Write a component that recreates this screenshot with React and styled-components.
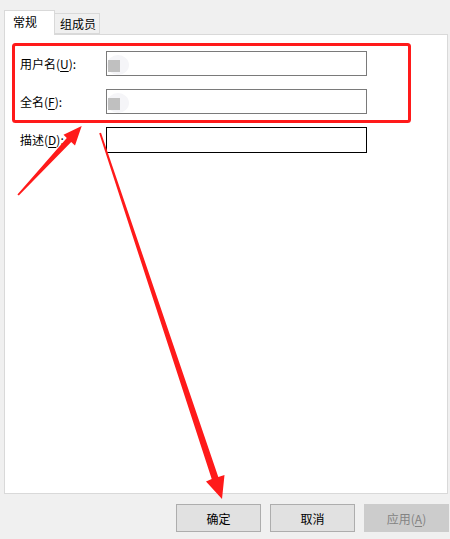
import React from "react";
import styled, { createGlobalStyle } from "styled-components";

const Global = createGlobalStyle`
  html, body { margin: 0; padding: 0; background: #f0f0f0; }
  body { font-family: "Noto Sans CJK SC", "Noto Sans", sans-serif; font-size: 12px; color: #000; }
`;

const Window = styled.div`
  position: relative;
  width: 450px;
  height: 539px;
  box-sizing: border-box;
  padding: 10px 1px 0 4px;
  display: flex;
  flex-direction: column;
`;

const TabRow = styled.div`
  display: flex;
  align-items: flex-end;
  height: 24px;
  position: relative;
  z-index: 1;
`;

const Tab = styled.div`
  box-sizing: border-box;
  height: ${(p) => (p.$active ? "25px" : "21px")};
  margin-bottom: ${(p) => (p.$active ? "-1px" : "0")};
  padding: ${(p) => (p.$active ? "0 0 2px 8px" : "0 0 0 5px")};
  width: ${(p) => (p.$active ? "51px" : "45px")};
  background: ${(p) => (p.$active ? "#fff" : "#f0f0f0")};
  border: 1px solid #d9d9d9;
  border-bottom: ${(p) => (p.$active ? "none" : "1px solid #d9d9d9")};
  border-left: ${(p) => (p.$active ? "1px solid #d9d9d9" : "none")};
  display: flex;
  align-items: center;
  font-size: 12px;
  line-height: 1;
`;

const Panel = styled.div`
  width: 444px;
  height: 460px;
  box-sizing: border-box;
  background: #fff;
  border: 1px solid #d9d9d9;
  padding: 16px 0 0 15px;
`;

const Form = styled.div`
  display: grid;
  grid-template-columns: 86px 261px;
  row-gap: 13px;
`;

const Label = styled.div`
  display: flex;
  align-items: center;
  height: 25px;
  font-size: 12px;
  u { text-decoration: underline; text-underline-offset: 2px; }
`;

const Input = styled.div`
  position: relative;
  box-sizing: border-box;
  height: ${(p) => (p.$tall ? "26px" : "25px")};
  border: 1px solid ${(p) => (p.$focus ? "#000" : "#7a7a7a")};
  background: #fff;
`;

const Blur = styled.span`
  position: absolute;
  left: 0px;
  top: 3px;
  width: 22px;
  height: 20px;
  border-radius: 50%;
  background: #f5f5f8;
`;

const Mask = styled.span`
  position: absolute;
  left: 1px;
  top: 8px;
  width: 12px;
  height: 12px;
  background: #c0c0c0;
`;

const ButtonRow = styled.div`
  display: flex;
  justify-content: flex-end;
  gap: 9px;
  margin-top: 10px;
`;

const Button = styled.div`
  box-sizing: border-box;
  width: 85px;
  height: 28px;
  display: flex;
  align-items: center;
  justify-content: center;
  background: ${(p) => (p.$disabled ? "#cccccc" : "#e1e1e1")};
  border: 1px solid ${(p) => (p.$disabled ? "#cccccc" : "#adadad")};
  color: ${(p) => (p.$disabled ? "#838383" : "#000")};
  font-size: 12px;
  u { text-decoration: underline; text-underline-offset: 2px; }
`;

const Overlay = styled.svg`
  position: absolute;
  left: 0;
  top: 0;
  pointer-events: none;
`;

const fields = [
  { label: "用户名", key: "U", mask: true },
  { label: "全名", key: "F", mask: true },
  { label: "描述", key: "D", focus: true, tall: true },
];

export default function App() {
  return (
    <>
      <Global />
      <Window>
        <TabRow>
          <Tab $active>常规</Tab>
          <Tab>组成员</Tab>
        </TabRow>
        <Panel>
          <Form>
            {fields.map((f) => (
              <React.Fragment key={f.key}>
                <Label>
                  {f.label}(<u>{f.key}</u>):
                </Label>
                <Input $focus={f.focus} $tall={f.tall}>
                  {f.mask && (
                    <>
                      <Blur />
                      <Mask />
                    </>
                  )}
                </Input>
              </React.Fragment>
            ))}
          </Form>
        </Panel>
        <ButtonRow>
          <Button>确定</Button>
          <Button>取消</Button>
          <Button $disabled>
            应用(<u>A</u>)
          </Button>
        </ButtonRow>
        <Overlay width="450" height="539" viewBox="0 0 450 539">
          <rect x="13.5" y="44.5" width="396" height="77" rx="2" fill="none" stroke="#ff1a1a" strokeWidth="3" />
          <polygon
            fill="#ff1a1a"
            points="17.4,194.4 18.8,195.6 71.2,142 75,145.5 81.7,126 63.5,134.8 66.8,138"
          />
          <polygon
            fill="#ff1a1a"
            points="99.2,133.3 101,132.7 218.3,476.9 224.5,475 222,499 206,481.5 211.7,479.1"
          />
        </Overlay>
      </Window>
    </>
  );
}
